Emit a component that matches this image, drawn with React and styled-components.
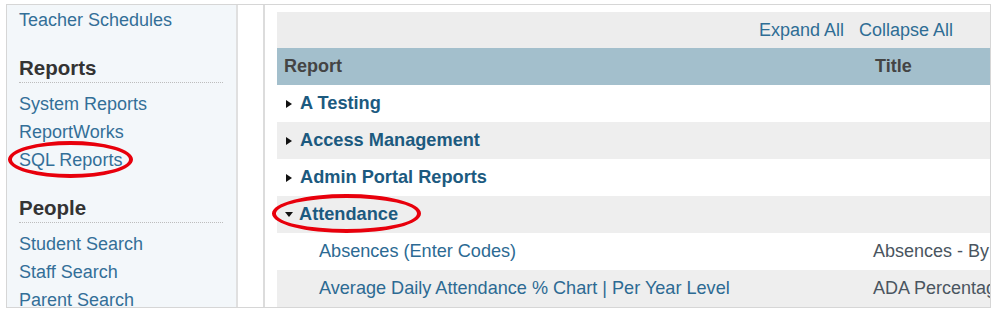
import styled, { createGlobalStyle } from "styled-components";

const sidebar = [
  { links: ["Teacher Schedules"] },
  { title: "Reports", links: ["System Reports", "ReportWorks", "SQL Reports"] },
  { title: "People", links: ["Student Search", "Staff Search", "Parent Search"] }
];

const rows = [
  { name: "A Testing", kind: "group" },
  { name: "Access Management", kind: "group" },
  { name: "Admin Portal Reports", kind: "group" },
  { name: "Attendance", kind: "group", open: true, circled: true },
  { name: "Absences (Enter Codes)", title: "Absences - By Date Range" },
  { name: "Average Daily Attendance % Chart | Per Year Level", title: "ADA Percentage Chart" }
];

const App = () => {
  return (
    <>
      <GlobalStyle />
      <Frame>
        <Sidebar>
          {sidebar.map((section, i) => (
            <Section key={i}>
              {section.title && <Heading>{section.title}</Heading>}
              {section.links.map((link) => (
                <NavLink key={link}>
                  {link}
                  {link === "SQL Reports" && <Circle $w={125} $h={37} $x={-11} $y={-5} />}
                </NavLink>
              ))}
            </Section>
          ))}
        </Sidebar>
        <Main>
          <Panel>
            <Toolbar>
              <ToolLink>Expand All</ToolLink>
              <ToolLink>Collapse All</ToolLink>
            </Toolbar>
            <HeaderRow>
              <HeadCell>Report</HeadCell>
              <HeadCell>Title</HeadCell>
            </HeaderRow>
            {rows.map((row, i) => (
              <Row key={row.name} $alt={i % 2 === 1}>
                {row.kind === "group" ? (
                  <GroupCell>
                    <Caret $open={row.open} />
                    {row.name}
                    {row.circled && <Circle $w={149} $h={39} $x={-5} $y={-2} />}
                  </GroupCell>
                ) : (
                  <ItemCell>{row.name}</ItemCell>
                )}
                <TitleCell>{row.title}</TitleCell>
              </Row>
            ))}
          </Panel>
        </Main>
      </Frame>
    </>
  );
};

export default App;

const GlobalStyle = createGlobalStyle`
  *, *::before, *::after {
    box-sizing: border-box;
  }
  body {
    margin: 0;
    background: #fff;
    font-family: "Liberation Sans", Arial, sans-serif;
  }
`;

const Frame = styled.div`
  margin: 4px 0 0 6px;
  width: 985px;
  height: 304px;
  border: 1px solid #d6d6d6;
  display: flex;
  overflow: hidden;
`;

const Sidebar = styled.div`
  width: 231px;
  flex-shrink: 0;
  background: #f3f7fa;
  border-right: 2px solid #e0e0e0;
  padding: 1px 13px 0 12px;
`;

const Section = styled.div`
  & + & {
    margin-top: 20px;
  }
`;

const Heading = styled.div`
  font-size: 20.5px;
  font-weight: bold;
  color: #333;
  line-height: 28px;
  border-bottom: 1px dotted #bdbdbd;
  margin-bottom: 7px;
`;

const NavLink = styled.div`
  position: relative;
  font-size: 18px;
  line-height: 28px;
  color: #336f98;
  width: max-content;
`;

const Circle = styled.span`
  position: absolute;
  left: ${(p) => p.$x}px;
  top: ${(p) => p.$y}px;
  width: ${(p) => p.$w}px;
  height: ${(p) => p.$h}px;
  border: 4px solid #e8000c;
  border-radius: 50%;
  pointer-events: none;
`;

const Main = styled.div`
  flex: 1;
  min-width: 0;
  margin-left: 25px;
  border-left: 2px solid #dcdcdc;
  padding: 7px 0 0 12px;
`;

const Panel = styled.div`
  display: flex;
  flex-direction: column;
`;

const Toolbar = styled.div`
  height: 36px;
  background: #ededed;
  display: flex;
  justify-content: flex-end;
  align-items: center;
  gap: 15px;
  padding-right: 37px;
`;

const ToolLink = styled.span`
  font-size: 18px;
  color: #2f6d95;
`;

const grid = `
  display: grid;
  grid-template-columns: 591px 1fr;
  height: 37px;
`;

const cell = `
  display: flex;
  align-items: center;
  white-space: nowrap;
`;

const HeaderRow = styled.div`
  ${grid}
  background: #a3bfcc;
`;

const HeadCell = styled.div`
  ${cell}
  font-size: 18px;
  font-weight: bold;
  color: #444;
  padding-left: 7px;
`;

const Row = styled.div`
  ${grid}
  background: ${(p) => (p.$alt ? "#eeeeee" : "#fff")};
`;

const GroupCell = styled.div`
  ${cell}
  position: relative;
  width: max-content;
  padding-left: 9px;
  font-size: 18.2px;
  font-weight: bold;
  color: #1c5a7f;
`;

const Caret = styled.span`
  width: 0;
  height: 0;
  margin-right: 9px;
  ${(p) =>
    p.$open
      ? `border-left: 4.5px solid transparent;
         border-right: 4.5px solid transparent;
         border-top: 5px solid #111;
         margin-left: -1px;
         margin-right: 6px;`
      : `border-top: 4.5px solid transparent;
         border-bottom: 4.5px solid transparent;
         border-left: 6px solid #111;
         margin-top: 1px;
         margin-right: 8px;`}
`;

const ItemCell = styled.div`
  ${cell}
  padding-left: 42px;
  font-size: 18.1px;
  color: #2c6a93;
`;

const TitleCell = styled.div`
  ${cell}
  padding-left: 5px;
  font-size: 18px;
  color: #4a5560;
  overflow: hidden;
`;
